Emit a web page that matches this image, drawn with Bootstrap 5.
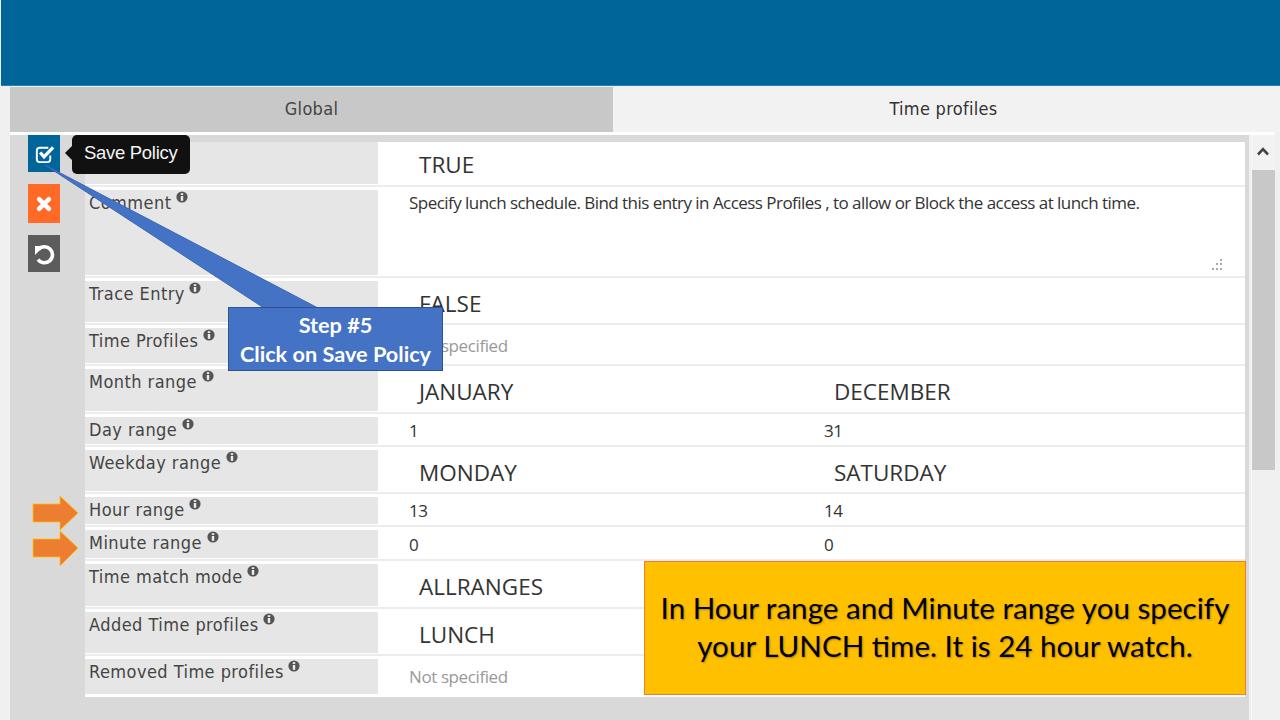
<!DOCTYPE html>
<html lang="en">
<head>
  <meta charset="UTF-8">
  <title>Time profiles</title>
  <link href="https://cdn.jsdelivr.net/npm/bootstrap@5.3.0/dist/css/bootstrap.min.css" rel="stylesheet">
  <style>
    body { background: #f0f0f0; width: 1280px; height: 720px; overflow: hidden; position: relative; }
    .top-bar { height: 85px; margin-left: 1px; background: #006699; border-bottom: 1px solid #2b7fae; box-sizing: content-box; }
    .tab-row { height: 45px; margin-top: 1px; padding-left: 10px; }
    .tab-item { font: 18px "DejaVu Sans Condensed", "DejaVu Sans", sans-serif; color: #444; display: flex; align-items: center; justify-content: center; letter-spacing: .3px; padding-bottom: 2px; }
    .tab-global { width: 603px; background: #c8c8c8; }
    .tab-time { flex: 1; background: #f2f2f2; color: #333; padding-right: 6px; }
    .work-area { margin-left: 10px; width: 1265px; border-top: 3px solid #fff; height: 588px; }
    .side-panel { width: 1239px; background: #d9d9d9; padding-top: 7px; padding-left: 75px; }
    .scroll-col { width: 24px; margin-left: 2px; background: #f0f0f0; border-left: 1px solid #f7f7f7; }
    .scroll-up { height: 35px; color: #444; background: #f2f2f2; display: flex; align-items: center; justify-content: center; padding-right: 2px; padding-bottom: 2px; }
    .scroll-thumb { height: 300px; background: #c8c8c8; }
    .policy-table { width: 1160px; background: #fff; padding-bottom: 3px; }
    .p-row { display: flex; border-bottom: 2px solid #ececec; margin-bottom: 3px; padding-bottom: 1px; background: #fff; }
    .p-row:last-child { border-bottom: 0; margin-bottom: 0; padding-bottom: 0; }
    .p-label { width: 293px; background: #e6e6e6; padding: 1px 0 0 4px; margin-right: 1px; font: 18px/22px "DejaVu Sans Condensed", "DejaVu Sans", sans-serif; letter-spacing: .45px; color: #444; flex: none; }
    .p-val { flex: 1; display: flex; }
    .p-val > div { width: 415px; color: #333; }
    .sel-val { font: 22.5px "Open Sans", sans-serif; padding: 7px 0 0 40px; color: #222; }
    .inp-val { font: 17px "Open Sans", sans-serif; padding: 0 0 0 30px; display: flex; align-items: center; letter-spacing: -.4px; }
    .muted-val { color: #999 !important; }
    .h-41 { height: 41px; } .h-42 { height: 42px; } .h-85 { height: 85px; } .h-35 { height: 35px; } .h-27 { height: 27px; } .h-28 { height: 28px; }
    .comment-val { position: relative; padding: 1px 0 0 30px; font: 17px "Open Sans", sans-serif; letter-spacing: -.54px; color: #333; width: 100%; }
    .grip { position: absolute; right: 21px; bottom: 3px; }
    .info-ico { vertical-align: 6px; margin-left: -1px; }
    .btn-stack { position: absolute; left: 28px; top: 135px; width: 32px; }
    .act-btn { display: flex; align-items: center; justify-content: center; width: 32px; color: #fff; }
    .act-save { height: 37px; background: #006699; margin-bottom: 12px; }
    .act-cancel { height: 39px; background: #ff6a26; margin-bottom: 12px; }
    .act-undo { height: 37px; background: #5c5c5c; }
    .save-tip { position: absolute; left: 72px; top: 135px; width: 118px; height: 39px; background: #111; border-radius: 5px; color: #f4f4f4; font: 18.5px "Liberation Sans", sans-serif; display: flex; align-items: center; padding: 0 0 4px 12px; letter-spacing: -.3px; }
    .save-tip::before { content: ""; position: absolute; left: -7px; top: 11px; border: 7px solid transparent; border-left: 0; border-right-color: #111; }
    .wedge { position: absolute; left: 0; top: 0; }
    .step-box { position: absolute; left: 228px; top: 307px; width: 215px; height: 64px; background: #4472c4; border: 1px solid #2f528f; color: #fff; font: 700 21.7px/28.5px Lato, sans-serif; text-align: center; padding-top: 3px; }
    .note-box { position: absolute; left: 644px; top: 561px; width: 602px; height: 134px; background: #ffc000; border: 1px solid #ed7d31; color: #000; font: 29.6px/38px Lato, sans-serif; text-align: center; padding-top: 27px; text-shadow: 1px 1px 2px rgba(0,0,0,.3); }
  </style>
</head>
<body>
  <svg width="0" height="0" class="position-absolute">
    <symbol id="info" viewBox="0 0 12 12">
      <circle cx="6" cy="6" r="5.6" fill="#555"/>
      <rect x="4.800" y="5" width="2.400" height="4.800" fill="#eee"/>
      <rect x="4.800" y="2.200" width="2.400" height="1.800" fill="#eee"/>
    </symbol>
  </svg>

  <div class="top-bar"></div>
  <div class="tab-row d-flex">
    <div class="tab-item tab-global">Global</div>
    <div class="tab-item tab-time">Time profiles</div>
  </div>

  <div class="work-area d-flex">
    <div class="side-panel">
      <div class="policy-table">
        <div class="p-row">
          <div class="p-label h-42"></div>
          <div class="p-val"><div class="sel-val">TRUE</div></div>
        </div>
        <div class="p-row">
          <div class="p-label h-85">Comment <svg class="info-ico" width="12" height="12"><use href="#info"/></svg></div>
          <div class="comment-val">Specify lunch schedule. Bind this entry in Access Profiles , to allow or Block the access at lunch time.
            <svg class="grip" width="14" height="14" viewBox="0 0 14 14" fill="#aaa"><rect x="10" y="1" width="2" height="2"/><rect x="6" y="5" width="2" height="2"/><rect x="10" y="5" width="2" height="2"/><rect x="2" y="10" width="2" height="2"/><rect x="6" y="10" width="2" height="2"/><rect x="10" y="10" width="2" height="2"/></svg>
          </div>
        </div>
        <div class="p-row">
          <div class="p-label h-41">Trace Entry <svg class="info-ico" width="12" height="12"><use href="#info"/></svg></div>
          <div class="p-val"><div class="sel-val">FALSE</div></div>
        </div>
        <div class="p-row">
          <div class="p-label h-35">Time Profiles <svg class="info-ico" width="12" height="12"><use href="#info"/></svg></div>
          <div class="p-val"><div class="inp-val muted-val">Not specified</div></div>
        </div>
        <div class="p-row">
          <div class="p-label h-42">Month range <svg class="info-ico" width="12" height="12"><use href="#info"/></svg></div>
          <div class="p-val"><div class="sel-val">JANUARY</div><div class="sel-val">DECEMBER</div></div>
        </div>
        <div class="p-row">
          <div class="p-label h-27">Day range <svg class="info-ico" width="12" height="12"><use href="#info"/></svg></div>
          <div class="p-val"><div class="inp-val">1</div><div class="inp-val">31</div></div>
        </div>
        <div class="p-row">
          <div class="p-label h-41">Weekday range <svg class="info-ico" width="12" height="12"><use href="#info"/></svg></div>
          <div class="p-val"><div class="sel-val">MONDAY</div><div class="sel-val">SATURDAY</div></div>
        </div>
        <div class="p-row">
          <div class="p-label h-27">Hour range <svg class="info-ico" width="12" height="12"><use href="#info"/></svg></div>
          <div class="p-val"><div class="inp-val">13</div><div class="inp-val">14</div></div>
        </div>
        <div class="p-row">
          <div class="p-label h-28">Minute range <svg class="info-ico" width="12" height="12"><use href="#info"/></svg></div>
          <div class="p-val"><div class="inp-val">0</div><div class="inp-val">0</div></div>
        </div>
        <div class="p-row">
          <div class="p-label h-42">Time match mode <svg class="info-ico" width="12" height="12"><use href="#info"/></svg></div>
          <div class="p-val"><div class="sel-val">ALLRANGES</div></div>
        </div>
        <div class="p-row">
          <div class="p-label h-41">Added Time profiles <svg class="info-ico" width="12" height="12"><use href="#info"/></svg></div>
          <div class="p-val"><div class="sel-val">LUNCH</div></div>
        </div>
        <div class="p-row">
          <div class="p-label h-35">Removed Time profiles <svg class="info-ico" width="12" height="12"><use href="#info"/></svg></div>
          <div class="p-val"><div class="inp-val muted-val">Not specified</div></div>
        </div>
      </div>
    </div>
    <div class="scroll-col">
      <div class="scroll-up">
        <svg width="12" height="9" viewBox="0 0 12 9" fill="none" stroke="#444" stroke-width="2.6"><path d="M1 7.500 6 2.200l5 5.300"/></svg>
      </div>
      <div class="scroll-thumb"></div>
    </div>
  </div>

  <div class="btn-stack">
    <div class="act-btn act-save">
      <svg width="23" height="23" viewBox="0 0 24 24" fill="none" stroke="#fff"><path d="M18 14v4a3 3 0 0 1-3 3H7a3 3 0 0 1-3-3V9a3 3 0 0 1 3-3h9" stroke-width="2"/><path d="M7.500 11l4 4.500L21 5.500" stroke-width="3.400"/></svg>
    </div>
    <div class="act-btn act-cancel">
      <svg width="18" height="18" viewBox="0 0 20 20" fill="none" stroke="#fff" stroke-width="5" stroke-linecap="round"><path d="M4.500 4.500l11 11M15.500 4.500l-11 11"/></svg>
    </div>
    <div class="act-btn act-undo">
      <svg width="24" height="24" viewBox="0 0 24 24" fill="none" stroke="#fff" stroke-width="3.600"><path d="M6.500 7.500A8 8 0 1 1 6 17.500"/><path d="M3 4h9l-9 9z" fill="#fff" stroke="none"/></svg>
    </div>
  </div>
  <div class="save-tip">Save Policy</div>

  <svg class="wedge" width="1280" height="720" viewBox="0 0 1280 720">
    <polygon points="45,165 264,308 318,308" fill="#4472c4" stroke="#3d67b3" stroke-width="1"/>
    <polygon points="33,504 60,504 60,496 78,513 60,530 60,522 33,522" fill="#ed7d31" stroke="#ffc000" stroke-width=".8"/>
    <polygon points="33,539 60,539 60,531 78,548 60,566 60,557 33,557" fill="#ed7d31" stroke="#ffc000" stroke-width=".8"/>
  </svg>
  <div class="step-box">Step #5<br>Click on Save Policy</div>
  <div class="note-box">In Hour range and Minute range you specify<br>your LUNCH time. It is 24 hour watch.</div>

  <script src="https://cdn.jsdelivr.net/npm/bootstrap@5.3.0/dist/js/bootstrap.bundle.min.js"></script>
</body>
</html>
